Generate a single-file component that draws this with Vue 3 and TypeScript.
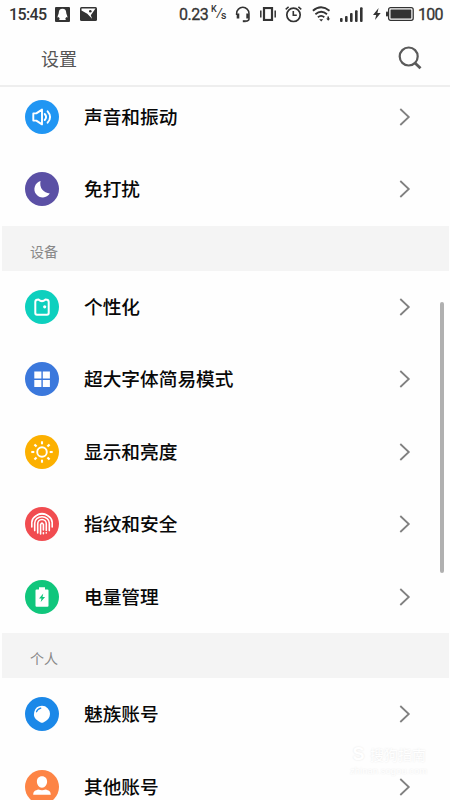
<script setup lang="ts">
type IconName = 'sound' | 'moon' | 'theme' | 'grid' | 'sun' | 'finger' | 'battery' | 'flyme' | 'user'

interface Item {
  label: string
  icon: IconName
}

interface Section {
  title?: string
  items: Item[]
}

const sections: Section[] = [
  {
    items: [
      { label: '声音和振动', icon: 'sound' },
      { label: '免打扰', icon: 'moon' },
    ],
  },
  {
    title: '设备',
    items: [
      { label: '个性化', icon: 'theme' },
      { label: '超大字体简易模式', icon: 'grid' },
      { label: '显示和亮度', icon: 'sun' },
      { label: '指纹和安全', icon: 'finger' },
      { label: '电量管理', icon: 'battery' },
    ],
  },
  {
    title: '个人',
    items: [
      { label: '魅族账号', icon: 'flyme' },
      { label: '其他账号', icon: 'user' },
    ],
  },
]

const rays = [0, 45, 90, 135, 180, 225, 270, 315]
</script>

<template>
  <div class="screen">
    <div class="status">
      <span class="time">15:45</span>
      <svg class="qq" width="15" height="15" viewBox="0 0 15 15">
        <rect width="15" height="15" rx="1" fill="#333" />
        <path d="M7.500 1.800C5 1.800 3.800 3.300 3.800 5.400c0 1.500-1.200 3-1.300 5 .5.500 1-.2 1.400-.4.100.9.500 1.400.9 1.800-.5.400-.7.800-.5 1.200h6.400c.2-.4 0-.8-.5-1.200.4-.4.8-.9.9-1.800.4.200.9.900 1.400.4-.1-2-1.300-3.500-1.300-5C11.200 3.300 10 1.800 7.500 1.800z" fill="#fff" />
      </svg>
      <svg class="pic" width="17" height="14" viewBox="0 0 17 14">
        <rect width="17" height="14" rx="1.500" fill="#333" />
        <path d="M1.500 1.500H15.500L10.800 8.300l1.300 3.400L7.300 6.800 1.500 3.600z" fill="#fff" />
        <circle cx="10.300" cy="4.300" r="1.300" fill="#333" />
      </svg>
      <span class="speed">0.23</span>
      <span class="unit"><sup>K</sup><i>/</i><sub>s</sub></span>
      <svg class="head" width="16" height="17" viewBox="0 0 16 17" fill="none" stroke="#333">
        <path d="M1.600 9V7.500a6 6 0 0 1 12.400 0V13q0 2-3.500 2.300" stroke-width="1.500" />
        <path d="M3 7.500v5M12.600 7.500v5" stroke-width="2.600" />
        <path d="M7.800 15.200h3" stroke-width="2" />
      </svg>
      <svg class="vib" width="16" height="14" viewBox="0 0 16 14" fill="none" stroke="#333">
        <rect x="4" y="1" width="8" height="12" stroke-width="2.200" />
        <path d="M.8 3.500v7M15.200 3.500v7" stroke-width="1.500" />
      </svg>
      <svg class="alarm" width="17" height="17" viewBox="0 0 17 17" fill="none" stroke="#333">
        <circle cx="8.500" cy="8.800" r="6.700" stroke-width="1.700" />
        <path d="M8.300 5v4.300h3.500" stroke-width="1.600" />
        <path d="M.7 3.300L3.600.9M16.300 3.300L13.400.9" stroke-width="1.500" />
      </svg>
      <svg class="wifi" width="19" height="16" viewBox="0 0 19 16" fill="none" stroke="#333" stroke-width="1.800">
        <path d="M.9 4.700Q9 -2.200 17.500 4.700M3.400 8.200Q9.200 3.200 15 8.200M5.900 11.200q3.300-2.700 6.400 0" />
        <path d="M7.200 13.200h4L9.200 15.500zM14.200 12.500h4L16.200 14.800zM15.400 10.500h1.600v2.200h-1.600z" fill="#333" stroke="none" />
      </svg>
      <svg class="signal" width="23" height="15" viewBox="0 0 23 15" fill="#333">
        <rect x="0" y="11" width="2.600" height="4" rx="1" />
        <rect x="5" y="9" width="2.600" height="6" rx="1" />
        <rect x="10" y="6" width="2.600" height="9" rx="1" />
        <rect x="15" y="3.200" width="2.600" height="11.800" rx="1" />
        <rect x="20" y="0.300" width="2.600" height="14.700" rx="1" />
      </svg>
      <svg class="bolt" width="8" height="12" viewBox="0 0 8 12">
        <path d="M5.600 0L0 7h3.200L2 12l5.700-7H4.400z" fill="#333" />
      </svg>
      <svg class="batt" width="28" height="14" viewBox="0 0 28 14">
        <rect x="2.600" y=".7" width="24.600" height="12.600" rx="2" fill="none" stroke="#333" stroke-width="1.300" />
        <rect x="4.500" y="2.600" width="20.800" height="8.800" rx=".5" fill="#333" />
        <rect x="0" y="4.500" width="2" height="5" rx=".8" fill="#333" />
      </svg>
      <span class="level">100</span>
    </div>

    <header class="bar">
      <h1>设置</h1>
      <svg width="24" height="24" viewBox="0 0 24 24" fill="none" stroke="#5a5a5a">
        <circle cx="10.700" cy="10.500" r="9" stroke-width="2.200" />
        <path d="M17 17l5.500 5.300" stroke-width="2.800" />
      </svg>
    </header>

    <main class="viewport">
      <div class="list">
        <section v-for="(section, i) in sections" :key="i">
          <h2 v-if="section.title">{{ section.title }}</h2>
          <div v-for="item in section.items" :key="item.label" class="row">
            <svg class="icon" :class="item.icon" viewBox="0 0 34 34" fill="none">
              <circle cx="17" cy="17" r="17" fill="currentColor" />
              <g v-if="item.icon === 'sound'" stroke="#fff" stroke-width="1.900" stroke-linejoin="round" stroke-linecap="round">
                <path d="M8.300 13.400h3L17 9.600v14.800l-5.700-3.800h-3z" />
                <path d="M19.700 14q2.800 3 0 6M22.600 11.300q5 5.700 0 11.400" />
              </g>
              <path v-else-if="item.icon === 'moon'" d="M15.600 9.100a8.300 8.300 0 1 0 9.200 12.300A9.700 9.700 0 0 1 15.600 9.100z" fill="#fff" />
              <g v-else-if="item.icon === 'theme'">
                <path d="M10.300 12q0-2 1.800-2.300l1.400-.2q3.500 3.200 7 0l1.400.2q1.800.3 1.800 2.300v11q0 1.700-1.700 1.700H12q-1.700 0-1.700-1.700z" stroke="#fff" stroke-width="2" stroke-linejoin="round" />
                <circle cx="19.700" cy="16.800" r="1.600" fill="#fff" />
              </g>
              <path v-else-if="item.icon === 'grid'" d="M9.300 9.500h7.100v7.100H9.300zM17.800 9.500h7.100v7.100h-7.100zM9.300 18h7.100v7.100H9.300zM17.800 18h7.100v7.100h-7.100z" fill="#fff" />
              <g v-else-if="item.icon === 'sun'" stroke="#fff">
                <circle cx="17" cy="17" r="4.800" stroke-width="1.900" />
                <path v-for="angle in rays" :key="angle" d="M17 6.300v3" stroke-width="2.100" :transform="`rotate(${angle} 17 17)`" />
              </g>
              <g v-else-if="item.icon === 'finger'" stroke="#fff" stroke-width="1.600" stroke-linecap="round">
                <path d="M9.300 10.500Q17 2.500 24.700 10.500" />
                <path d="M6.800 20v-4.500a10.200 8.500 0 0 1 20.400 0V20" />
                <path d="M9.700 23.600v-7.300a7.300 6.500 0 0 1 14.600 0v7.300" />
                <path d="M12.700 26v-9a4.300 4.500 0 0 1 8.600 0v6.400M15.600 27v-9.500q1.400-2.800 2.800 0V23M18.400 25.700v1.100M21.300 25.700v.3" />
              </g>
              <g v-else-if="item.icon === 'battery'">
                <path d="M14 7.300h6v2.200h2.500q1 0 1 1v15.200q0 1-1 1h-11q-1 0-1-1V10.500q0-1 1-1H14z" fill="#fff" />
                <path d="M18.300 13.600l-4.300 4.900h2.500l-.8 3.500 4.400-5h-2.600z" fill="currentColor" />
              </g>
              <g v-else-if="item.icon === 'flyme'">
                <path d="M17 8.800a8 8 0 0 1 8 8c0 3.500-2 5.900-4.200 7.200l-2.500 1.400q-1.300.8-2.600 0L13.200 24A8.100 8.100 0 0 1 17 8.800z" fill="#fff" />
                <path d="M11.500 14.800q1-3 4.300-3.700" stroke="currentColor" stroke-width="1.200" stroke-linecap="round" />
              </g>
              <path v-else d="M17 6.200c3.300 0 5.100 2.300 5.100 5.400 0 3.200-2 6.200-5.100 6.200s-5.100-3-5.100-6.200c0-3.100 1.800-5.400 5.100-5.400zM8.200 24.800c0-3.700 2.200-4.600 5.300-5.400q3.500 1.500 7 0c3.100.8 5.300 1.700 5.300 5.400z" fill="#fff" />
            </svg>
            <span class="label">{{ item.label }}</span>
            <svg class="chevron" width="12" height="18" viewBox="0 0 12 18" fill="none" stroke="#808080" stroke-width="1.800">
              <path d="M1.300 1L9.800 9l-8.500 8" />
            </svg>
          </div>
        </section>
      </div>
    </main>

    <div class="scrollbar"></div>
    <div class="watermark">
      <div class="brand"><b>S</b>搜狗指南</div>
      <div class="site">zhinan.sogou.com</div>
    </div>
  </div>
</template>

<style>
body {
  margin: 0;
  background: #fefefe;
}
</style>

<style scoped>
.screen {
  position: relative;
  width: 450px;
  height: 800px;
  display: flex;
  flex-direction: column;
  overflow: hidden;
  background: #fefefe;
  font-family: "Noto Sans CJK SC", sans-serif;
}
.status {
  flex: none;
  display: flex;
  align-items: center;
  height: 28px;
  padding-left: 9px;
  color: #333;
  font: 500 16px/28px Roboto, sans-serif;
  white-space: nowrap;
}
.status svg {
  flex: none;
}
.time {
  width: 46px;
  padding-top: 1px;
  letter-spacing: -0.6px;
}
.pic {
  margin-left: 10px;
}
.speed {
  width: 30px;
  margin-left: 82px;
  padding-top: 1px;
  font-weight: 400;
  -webkit-text-stroke: 0.3px #333;
  letter-spacing: -0.5px;
}
.unit {
  display: flex;
  width: 17px;
  margin-left: 2px;
  font-size: 10px;
  line-height: 12px;
}
.unit sup {
  font-size: 9px;
  margin-top: -4px;
}
.unit i {
  font-size: 13px;
  font-weight: 400;
}
.unit sub {
  font-size: 10.5px;
  margin-top: 3px;
  margin-left: -1px;
}
.head {
  margin-left: 7px;
}
.vib {
  margin-left: 9px;
}
.alarm {
  margin-left: 9px;
}
.wifi {
  margin-left: 10px;
}
.signal {
  margin-left: 9px;
}
.bolt {
  margin-left: 10px;
}
.batt {
  margin-left: 5px;
}
.level {
  margin-left: 4px;
  padding-top: 1px;
  font-weight: 400;
  -webkit-text-stroke: 0.3px #333;
  letter-spacing: -0.8px;
}
.bar {
  flex: none;
  box-sizing: border-box;
  display: flex;
  align-items: center;
  justify-content: space-between;
  height: 59px;
  padding: 3px 28px 0 41px;
  border-bottom: 2px solid #eee;
}
.bar h1 {
  margin: 0;
  color: #555;
  font-size: 18px;
  font-weight: 400;
  line-height: 28px;
}
.viewport {
  flex: 1;
  min-height: 0;
  overflow: hidden;
}
.list {
  margin-top: -6.5px;
}
h2 {
  box-sizing: border-box;
  height: 45px;
  margin: 0 1px 0 2px;
  padding: 3px 0 0 28px;
  background: #f4f4f4;
  color: #888;
  font-size: 14px;
  font-weight: 400;
  line-height: 44px;
}
.row {
  display: flex;
  align-items: center;
  height: 72.5px;
  padding: 0 39px 0 25px;
}
.icon {
  width: 34px;
  height: 34px;
  margin-right: 25px;
}
.label {
  flex: 1;
  padding-bottom: 2px;
  color: #080808;
  font-size: 18.7px;
  font-weight: 500;
  line-height: 28px;
}
.sound { color: #2196f3; }
.moon { color: #5b50a5; }
.theme { color: #0dd0be; }
.grid { color: #3b78dc; }
.sun { color: #fcb000; }
.finger { color: #f14c50; }
.battery { color: #10c67c; }
.flyme { color: #1b88e8; }
.user { color: #fd8445; }
.scrollbar {
  position: absolute;
  top: 302px;
  left: 440px;
  width: 4px;
  height: 271px;
  border-radius: 2px;
  background: #b0b0b0;
}
.watermark {
  position: absolute;
  top: 743px;
  left: 350px;
  width: 78px;
  color: #fff;
  text-shadow: 0 0 2px #e4e4e4;
}
.brand {
  display: flex;
  align-items: center;
  gap: 3px;
  height: 21px;
  font-size: 14px;
  line-height: 20px;
  white-space: nowrap;
}
.brand b {
  width: 17px;
  font: 700 18px/20px "Liberation Sans", sans-serif;
  text-align: center;
}
.site {
  font: 9.5px/13px "Liberation Sans", sans-serif;
}
</style>
